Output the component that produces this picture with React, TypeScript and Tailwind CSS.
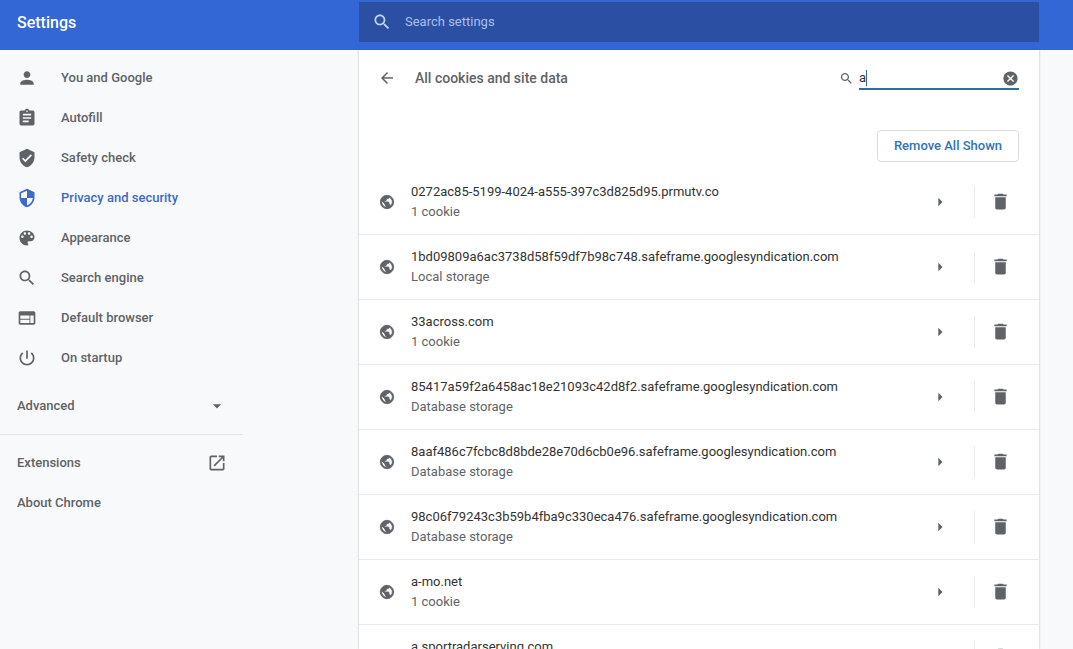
import React from "react";

const paths = {
  person: "M12 12c2.21 0 4-1.79 4-4s-1.79-4-4-4-4 1.79-4 4 1.79 4 4 4zm0 2c-2.67 0-8 1.34-8 4v2h16v-2c0-2.66-5.33-4-8-4z",
  assignment: "M19 3h-4.18C14.4 1.84 13.3 1 12 1c-1.3 0-2.4.84-2.82 2H5c-1.1 0-2 .9-2 2v14c0 1.1.9 2 2 2h14c1.1 0 2-.9 2-2V5c0-1.1-.9-2-2-2zm-7 0c.55 0 1 .45 1 1s-.45 1-1 1-1-.45-1-1 .45-1 1-1zm2 14H7v-2h7v2zm3-4H7v-2h10v2zm0-4H7V7h10v2z",
  verified: "M12 1L3 5v6c0 5.55 3.84 10.74 9 12 5.16-1.26 9-6.45 9-12V5l-9-4zm-2 16l-4-4 1.41-1.41L10 14.17l6.59-6.59L18 9l-8 8z",
  security: "M12 1L3 5v6c0 5.55 3.84 10.74 9 12 5.16-1.26 9-6.45 9-12V5l-9-4zm0 10.99h7c-.53 4.12-3.28 7.79-7 8.94V12H5V6.3l7-3.11v8.8z",
  palette: "M12 3c-4.97 0-9 4.03-9 9s4.03 9 9 9c.83 0 1.5-.67 1.5-1.5 0-.39-.15-.74-.39-1.01-.23-.26-.38-.61-.38-.99 0-.83.67-1.5 1.5-1.5H16c2.76 0 5-2.24 5-5 0-4.42-4.03-8-9-8zm-5.5 9c-.83 0-1.5-.67-1.5-1.5S5.67 9 6.5 9 8 9.67 8 10.5 7.33 12 6.5 12zm3-4C8.67 8 8 7.33 8 6.5S8.67 5 9.5 5s1.5.67 1.5 1.5S10.33 8 9.5 8zm5 0c-.83 0-1.5-.67-1.5-1.5S13.67 5 14.5 5s1.5.67 1.5 1.5S15.33 8 14.5 8zm3 4c-.83 0-1.5-.67-1.5-1.5S16.67 9 17.5 9s1.5.67 1.5 1.5-.67 1.5-1.5 1.5z",
  search: "M15.5 14h-.79l-.28-.27C15.41 12.59 16 11.11 16 9.5 16 5.91 13.09 3 9.5 3S3 5.91 3 9.5 5.91 16 9.5 16c1.61 0 3.09-.59 4.23-1.57l.27.28v.79l5 4.99L20.49 19l-4.99-5zm-6 0C7.01 14 5 11.99 5 9.5S7.01 5 9.5 5 14 7.01 14 9.5 11.99 14 9.5 14z",
  web: "M20 4H4c-1.1 0-1.99.9-1.99 2L2 18c0 1.1.9 2 2 2h16c1.1 0 2-.9 2-2V6c0-1.1-.9-2-2-2zm-5 14H4v-4h11v4zm0-5H4V9h11v4zm5 5h-4V9h4v9z",
  power: "M13 3h-2v10h2V3zm4.83 2.17l-1.42 1.42C17.99 7.86 19 9.81 19 12c0 3.87-3.13 7-7 7s-7-3.13-7-7c0-2.19 1.01-4.14 2.58-5.42L6.17 5.17C4.23 6.82 3 9.26 3 12c0 4.97 4.03 9 9 9s9-4.03 9-9c0-2.74-1.23-5.18-3.17-6.83z",
  open: "M19 19H5V5h7V3H5c-1.11 0-2 .9-2 2v14c0 1.1.89 2 2 2h14c1.1 0 2-.9 2-2v-7h-2v7zM14 3v2h3.59l-9.83 9.83 1.41 1.41L19 6.41V10h2V3h-7z",
  back: "M20 11H7.83l5.59-5.59L12 4l-8 8 8 8 1.41-1.41L7.83 13H20v-2z",
  globe: "M12 2C6.48 2 2 6.48 2 12s4.48 10 10 10 10-4.48 10-10S17.52 2 12 2zm-1 17.93c-3.95-.49-7-3.85-7-7.93 0-.62.08-1.21.21-1.79L9 15v1c0 1.1.9 2 2 2v1.93zm6.9-2.54c-.26-.81-1-1.39-1.9-1.39h-1v-3c0-.55-.45-1-1-1H8v-2h2c.55 0 1-.45 1-1V7h2c1.1 0 2-.9 2-2v-.41c2.93 1.19 5 4.06 5 7.41 0 2.08-.8 3.97-2.1 5.39z",
  trash: "M6 19c0 1.1.9 2 2 2h8c1.1 0 2-.9 2-2V7H6v12zM19 4h-3.5l-1-1h-5l-1 1H5v2h14V4z",
  cancel: "M12 2C6.47 2 2 6.47 2 12s4.47 10 10 10 10-4.47 10-10S17.53 2 12 2zm5 13.59L15.59 17 12 13.41 8.41 17 7 15.59 10.59 12 7 8.41 8.41 7 12 10.59 15.59 7 17 8.41 13.41 12 17 15.59z",
  right: "M10 17l5-5-5-5v10z",
  down: "M7 10l5 5 5-5z",
};

const Icon = ({ d, className }: { d: string; className: string }) => (
  <svg viewBox="0 0 24 24" fill="currentColor" className={className}>
    <path d={d} />
  </svg>
);

const nav = [
  { label: "You and Google", icon: paths.person },
  { label: "Autofill", icon: paths.assignment },
  { label: "Safety check", icon: paths.verified },
  { label: "Privacy and security", icon: paths.security, active: true },
  { label: "Appearance", icon: paths.palette },
  { label: "Search engine", icon: paths.search },
  { label: "Default browser", icon: paths.web },
  { label: "On startup", icon: paths.power },
];

const sites = [
  ["0272ac85-5199-4024-a555-397c3d825d95.prmutv.co", "1 cookie"],
  ["1bd09809a6ac3738d58f59df7b98c748.safeframe.googlesyndication.com", "Local storage"],
  ["33across.com", "1 cookie"],
  ["85417a59f2a6458ac18e21093c42d8f2.safeframe.googlesyndication.com", "Database storage"],
  ["8aaf486c7fcbc8d8bde28e70d6cb0e96.safeframe.googlesyndication.com", "Database storage"],
  ["98c06f79243c3b59b4fba9c330eca476.safeframe.googlesyndication.com", "Database storage"],
  ["a-mo.net", "1 cookie"],
  ["a.sportradarserving.com", "1 cookie"],
];

export default function App() {
  return (
    <div className="flex h-screen w-full flex-col overflow-hidden bg-[#f8f9fa] font-['Roboto',sans-serif] text-[13px]">
      <header className="flex h-[50px] shrink-0 bg-[#3367d6] text-white">
        <div className="flex h-[46px] w-[359px] items-center pl-[17px] text-[16px] font-medium">Settings</div>
        <div className="mt-[2px] flex h-[40px] w-[680px] items-center bg-[#2a4fa3] pl-[13px] text-[#a9c0ee]">
          <Icon d={paths.search} className="h-5 w-5 text-[#c6d6f5]" />
          <span className="ml-[13px]">Search settings</span>
        </div>
      </header>

      <div className="flex min-h-0 flex-1">
        <nav className="w-[359px] shrink-0 pt-2 font-medium text-[#5f6368]">
          {nav.map((item) => (
            <div key={item.label} className={`flex h-10 items-center pl-[17px] ${item.active ? "text-[#3d6bc6]" : ""}`}>
              <Icon d={item.icon} className="h-5 w-5" />
              <span className="ml-6">{item.label}</span>
            </div>
          ))}
          <div className="mt-2 flex h-10 w-[243px] items-center justify-between pl-[17px] pr-4">
            <span>Advanced</span>
            <Icon d={paths.down} className="h-5 w-5" />
          </div>
          <div className="mt-2 w-[243px] border-t border-[#e3e5e8]" />
          <div className="mt-2 flex h-10 w-[243px] items-center justify-between pl-[17px] pr-4">
            <span>Extensions</span>
            <Icon d={paths.open} className="h-5 w-5" />
          </div>
          <div className="flex h-10 items-center pl-[17px]">About Chrome</div>
        </nav>

        <main className="w-[680px] shrink-0 overflow-hidden bg-white shadow-[0_0_2px_rgba(60,64,67,0.35)]">
          <div className="flex h-[56px] items-center pl-[19px] pr-5">
            <Icon d={paths.back} className="h-[18px] w-[18px] text-[#5f6368]" />
            <h1 className="ml-[19px] flex-1 text-[14px] font-medium text-[#5f6368]">All cookies and site data</h1>
            <Icon d={paths.search} className="mr-[5px] h-[15px] w-[15px] text-[#5f6368]" />
            <div className="flex h-6 w-40 items-center justify-between border-b-2 border-[#2f6f9f] pt-[2px] text-[#333]">
              <span className="border-r border-[#2f6f9f] leading-4">a</span>
              <Icon d={paths.cancel} className="h-[17px] w-[17px] text-[#5f6368]" />
            </div>
          </div>
          <div className="flex h-[64px] items-start justify-end pr-5 pt-6">
            <button className="h-[32px] w-[142px] rounded border border-[#dadce0] bg-white font-medium text-[#2f74b5]">
              Remove All Shown
            </button>
          </div>
          {sites.map(([name, kind]) => (
            <div key={name} className="flex h-[65px] items-center border-b border-[#e8eaed] pl-5">
              <svg viewBox="0 0 24 24" fill="currentColor" className="h-4 w-4 stroke-current text-[#5f6368] [stroke-width:1.3]">
                <path d={paths.globe} />
              </svg>
              <div className="ml-4 flex-1 leading-5">
                <div className="text-[#333]">{name}</div>
                <div className="text-[#5f6368]">{kind}</div>
              </div>
              <Icon d={paths.right} className="h-5 w-5 text-[#5f6368]" />
              <div className="ml-6 h-8 border-l border-[#e8eaed]" />
              <Icon d={paths.trash} className="mb-[1px] ml-[15px] mr-[28px] h-[21px] w-[21px] text-[#5f6368]" />
            </div>
          ))}
        </main>
      </div>
    </div>
  );
}
